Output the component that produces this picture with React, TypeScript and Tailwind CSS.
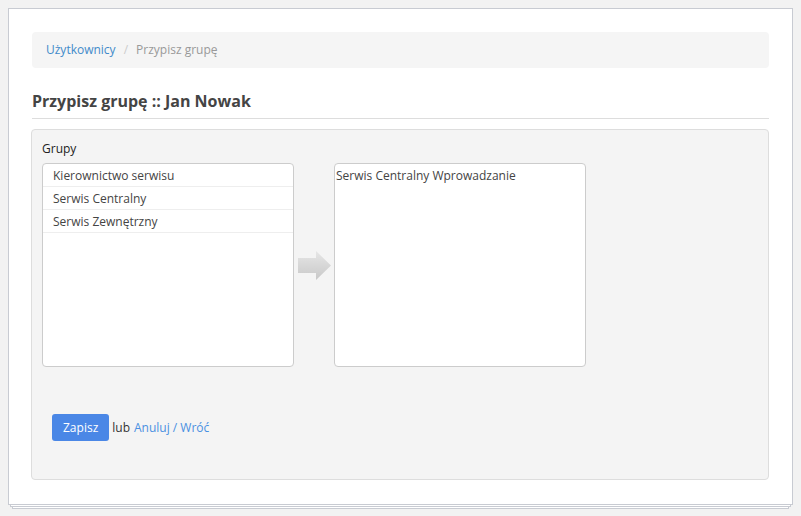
export default function App() {
  return (
    <div className="min-h-[516px] bg-[#f2f2f2] pt-2 px-2 font-['Open_Sans',sans-serif] text-[12px] text-[#333]">
      <div className="relative">
        <div className="relative z-10 h-[497px] border border-[#c8cbd2] bg-white px-[23px] pt-[23px]">
          <div className="flex h-[36px] items-center gap-[8px] rounded bg-[#f5f5f5] px-[14px] text-[12px]">
            <a href="#" className="text-[#428bca]">Użytkownicy</a>
            <span className="text-[#ccc]">/</span>
            <span className="text-[#999]">Przypisz grupę</span>
          </div>

          <h1 className="mt-[22px] border-b border-[#ddd] pb-[6px] text-[16px] font-bold leading-[22px] text-[#444]">
            Przypisz grupę :: Jan Nowak
          </h1>

          <div className="-ml-px mt-[10px] h-[351px] rounded-sm border border-[#ddd] bg-[#f4f4f4] px-[10px] pt-[10px]">
            <div className="text-[12px] leading-[18px] text-[#222]">Grupy</div>
            <div className="mt-[5px] flex items-center">
              <div className="h-[204px] w-[252px] rounded border border-[#ccc] bg-white">
                {['Kierownictwo serwisu', 'Serwis Centralny', 'Serwis Zewnętrzny'].map((g) => (
                  <div key={g} className="h-[23px] border-b border-[#eee] pl-[10px] leading-[23px] text-[#444]">
                    {g}
                  </div>
                ))}
              </div>
              <div className="flex w-[40px] justify-center">
                <svg width="33" height="29" viewBox="0 0 33 29">
                  <defs>
                    <linearGradient id="ag" x1="0" y1="0" x2="0" y2="1">
                      <stop offset="0" stopColor="#e6e6e6" />
                      <stop offset="1" stopColor="#c8c8c8" />
                    </linearGradient>
                  </defs>
                  <path d="M0 7 H18 V0 L33 14.5 L18 29 V22 H0 Z" fill="url(#ag)" />
                </svg>
              </div>
              <div className="h-[204px] w-[252px] rounded border border-[#ccc] bg-white pl-[1px] pt-[3px] leading-[18px] text-[#444]">
                Serwis Centralny Wprowadzanie
              </div>
            </div>

            <div className="mt-[47px] flex items-center pl-[10px]">
              <button className="h-[27px] rounded-[3px] bg-[#4a87e6] px-[11px] text-[12px] text-white">Zapisz</button>
              <span className="ml-[3px] text-[#333]">lub</span>
              <a href="#" className="ml-[4px] text-[#4a90e2]">Anuluj / Wróć</a>
            </div>
          </div>
        </div>
        <div className="mx-[2px] h-[2px] border-x border-b border-[#c8cbd2] bg-white" />
        <div className="mx-[4px] h-[2px] border-x border-b border-[#c8cbd2] bg-white" />
      </div>
    </div>
  );
}
